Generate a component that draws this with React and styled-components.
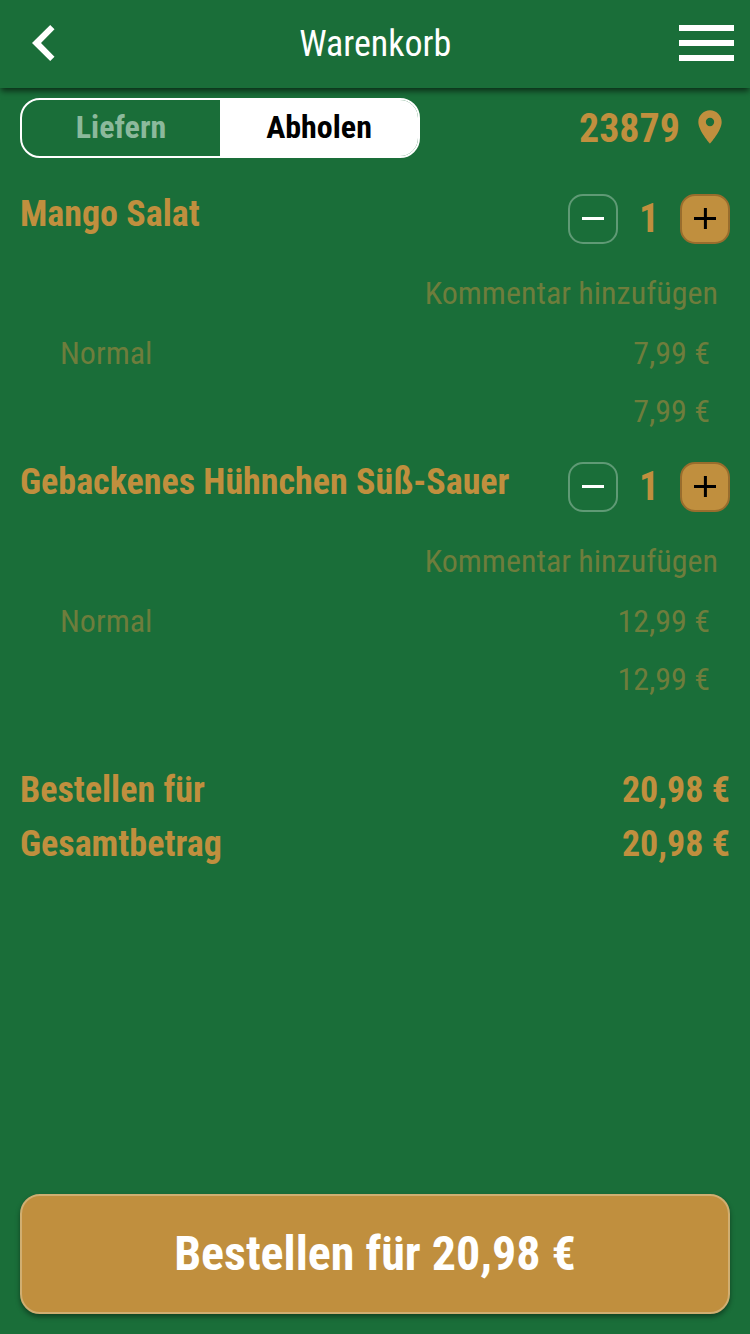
import React from 'react';
import styled, { createGlobalStyle } from 'styled-components';
import { MdPlace } from 'react-icons/md';

const GlobalStyle = createGlobalStyle`
  * {
    box-sizing: border-box;
  }
  body {
    margin: 0;
    background: #1a6e39;
    font-family: 'Roboto Condensed', Roboto, sans-serif;
    font-stretch: 75%;
  }
`;

const Page = styled.div`
  display: flex;
  flex-direction: column;
  height: 1334px;
  color: #c08f3e;
`;

const Header = styled.header`
  display: flex;
  align-items: center;
  justify-content: space-between;
  height: 88px;
  padding: 0 16.5px 2px 31px;
  color: white;
  box-shadow: 0 4px 6px -1px rgba(0, 0, 0, 0.6);
`;

const Title = styled.h1`
  margin: 2px 0 0 17px;
  font-size: 36px;
  font-weight: 400;
`;

const Toolbar = styled.div`
  display: flex;
  justify-content: space-between;
  align-items: center;
  padding: 10px 20px 0;
`;

const Toggle = styled.div`
  display: flex;
  width: 400px;
  height: 60px;
  border: 2px solid white;
  border-radius: 20px;
  overflow: hidden;
`;

const Option = styled.button`
  flex: 1;
  padding: 0 0 3px;
  border: 0;
  font: inherit;
  font-size: 32px;
  font-weight: 700;
  background: ${props => (props.$active ? 'white' : 'transparent')};
  color: ${props => (props.$active ? 'black' : '#8cb99c')};
`;

const Zip = styled.div`
  display: flex;
  align-items: center;
  gap: 10px;
  font-size: 40px;
  font-weight: 700;

  svg {
    margin-bottom: 2px;
  }
`;

const Items = styled.ul`
  margin: 36px 0 0;
  padding: 0 20px;
  list-style: none;
`;

const Item = styled.li`
  height: 268px;
`;

const ItemHead = styled.div`
  display: flex;
  justify-content: space-between;
  height: 70px;
`;

const Name = styled.h2`
  margin: 0;
  font-size: 36px;
  line-height: 40px;
  font-weight: 700;
`;

const Stepper = styled.div`
  display: flex;
  align-items: center;
  height: 50px;
`;

const StepButton = styled.button`
  display: flex;
  align-items: center;
  justify-content: center;
  width: 50px;
  height: 50px;
  padding: 0 0 1px;
  border-radius: 15px;
  border: 2px solid ${props => (props.$filled ? '#996d2d' : '#5f9a75')};
  background: ${props => (props.$filled ? '#c08f3e' : 'transparent')};
  color: ${props => (props.$filled ? 'black' : 'white')};
`;

const Count = styled.span`
  width: 62px;
  padding-bottom: 2px;
  text-align: center;
  font-size: 40px;
  font-weight: 700;
`;

const Comment = styled.div`
  padding-right: 12px;
  height: 58px;
  line-height: 58px;
  text-align: right;
  font-size: 32px;
  color: #6e7d3c;
`;

const Line = styled.div`
  display: flex;
  justify-content: space-between;
  padding: 0 20px 0 40px;
  height: 58px;
  line-height: 62px;
  font-size: 32px;
  color: #6e7d3c;
`;

const Totals = styled.div`
  margin-top: 33px;
  padding: 0 20px;
`;

const Total = styled.div`
  display: flex;
  justify-content: space-between;
  font-size: 36px;
  line-height: 54px;
  font-weight: 700;
`;

const OrderButton = styled.button`
  height: 120px;
  margin: auto 20px 20px;
  padding: 0 0 2px;
  border: 2px solid #d0ae71;
  border-radius: 20px;
  background: #c08f3e;
  color: white;
  font: inherit;
  font-size: 48px;
  font-weight: 700;
  box-shadow: 0 3px 5px rgba(0, 0, 0, 0.4);
`;

const items = [
  { name: 'Mango Salat', variant: 'Normal', price: '7,99 €' },
  { name: 'Gebackenes Hühnchen Süß-Sauer', variant: 'Normal', price: '12,99 €' },
];

function BackIcon() {
  return (
    <svg width="24" height="36" viewBox="0 0 24 36" fill="currentColor">
      <path d="M19.2 0 23.5 4.2 10 18 23.5 31.8 19.2 36 1 18Z" />
    </svg>
  );
}

function MenuIcon() {
  return (
    <svg width="55" height="36" viewBox="0 0 55 36" fill="currentColor">
      <path d="M0 0H55V6H0ZM0 15H55V21H0ZM0 30H55V36H0Z" />
    </svg>
  );
}

function StepIcon({ plus }) {
  return (
    <svg width="22" height="21" viewBox="0 0 22 21" stroke="currentColor" strokeWidth="3">
      <path d={plus ? 'M0 10.5H22M11.4 0V21' : 'M0 10.5H22'} />
    </svg>
  );
}

function CartItem({ name, variant, price }) {
  return (
    <Item>
      <ItemHead>
        <Name>{name}</Name>
        <Stepper>
          <StepButton><StepIcon /></StepButton>
          <Count>1</Count>
          <StepButton $filled><StepIcon plus /></StepButton>
        </Stepper>
      </ItemHead>
      <Comment>Kommentar hinzufügen</Comment>
      <Line>
        <span>{variant}</span>
        <span>{price}</span>
      </Line>
      <Line>
        <span />
        <span>{price}</span>
      </Line>
    </Item>
  );
}

export default function App() {
  return (
    <Page>
      <GlobalStyle />
      <Header>
        <BackIcon />
        <Title>Warenkorb</Title>
        <MenuIcon />
      </Header>
      <Toolbar>
        <Toggle>
          <Option>Liefern</Option>
          <Option $active>Abholen</Option>
        </Toggle>
        <Zip>
          23879
          <MdPlace />
        </Zip>
      </Toolbar>
      <Items>
        {items.map(item => (
          <CartItem key={item.name} {...item} />
        ))}
      </Items>
      <Totals>
        <Total>
          <span>Bestellen für</span>
          <span>20,98 €</span>
        </Total>
        <Total>
          <span>Gesamtbetrag</span>
          <span>20,98 €</span>
        </Total>
      </Totals>
      <OrderButton>Bestellen für 20,98 €</OrderButton>
    </Page>
  );
}
